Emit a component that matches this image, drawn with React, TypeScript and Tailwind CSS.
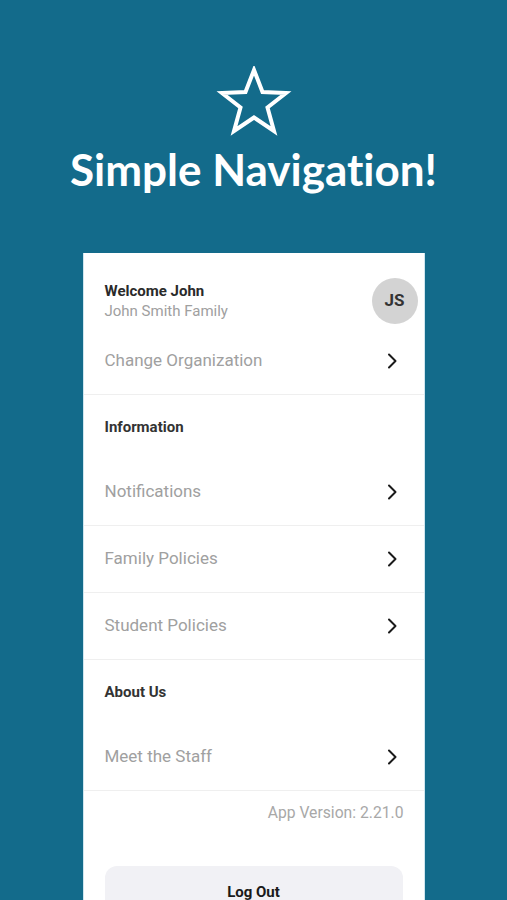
import React from "react";

const Chevron = () => (
  <svg width="12" height="18" viewBox="0 0 12 18" fill="none" className="shrink-0">
    <path d="M3 2.5 L9.5 9 L3 15.5" stroke="#1a1a1a" strokeWidth="2" strokeLinecap="round" strokeLinejoin="round" />
  </svg>
);

const Row = ({ label }: { label: string }) => (
  <div className="flex h-[67px] shrink-0 items-center justify-between border-b border-[#efefef] pl-[21px] pr-[26px]">
    <span className="text-[17px] text-[#a0a0a0]">{label}</span>
    <Chevron />
  </div>
);

const Section = ({ label }: { label: string }) => (
  <div className="flex h-16 shrink-0 items-center pl-[21px] text-[15px] font-bold text-[#333333]">{label}</div>
);

export default function App() {
  return (
    <div className="flex h-[900px] w-full flex-col items-center overflow-hidden bg-[#136b8b]" style={{ fontFamily: "Roboto, 'Liberation Sans', sans-serif" }}>
      <svg width="76" height="72" viewBox="0 0 76 72" className="mt-[66px] shrink-0" fill="none">
        <polygon
          points="38,4 46.5,26 70,27 51.5,41.5 58,65 38,51.5 18,65 24.5,41.5 6,27 29.5,26"
          stroke="white"
          strokeWidth="4"
          strokeLinejoin="miter"
        />
      </svg>
      <h1 className="mt-[5px] shrink-0 text-[44px] font-bold leading-[52px] text-white [font-variant-ligatures:none]" style={{ fontFamily: "Lato, 'Open Sans', sans-serif" }}>
        Simple Navigation!
      </h1>
      <div className="mt-[58px] flex w-[342px] shrink-0 flex-col border-x border-[#cfe6ef] bg-white pb-6">
        <div className="flex items-center justify-between pl-[21px] pr-[6px] pt-[25px]">
          <div className="flex flex-col">
            <span className="text-[15px] font-bold leading-5 text-[#2a2a2a]">Welcome John</span>
            <span className="text-[15px] leading-5 text-[#a0a0a0]">John Smith Family</span>
          </div>
          <div className="flex h-[46px] w-[46px] items-center justify-center rounded-full bg-[#d3d3d3] text-[17px] font-bold text-[#333333]">
            JS
          </div>
        </div>
        <div className="mt-1">
          <Row label="Change Organization" />
        </div>
        <Section label="Information" />
        <Row label="Notifications" />
        <Row label="Family Policies" />
        <Row label="Student Policies" />
        <Section label="About Us" />
        <Row label="Meet the Staff" />
        <div className="flex justify-end pr-[20px] pt-[10px] text-[15.7px] text-[#a8a8a8]">App Version: 2.21.0</div>
        <div className="mx-[21px] mt-[41px] flex h-[54px] items-center justify-center rounded-[12px] bg-[#f1f1f5] text-[15px] font-bold text-[#1a1a1a]">
          Log Out
        </div>
      </div>
    </div>
  );
}
